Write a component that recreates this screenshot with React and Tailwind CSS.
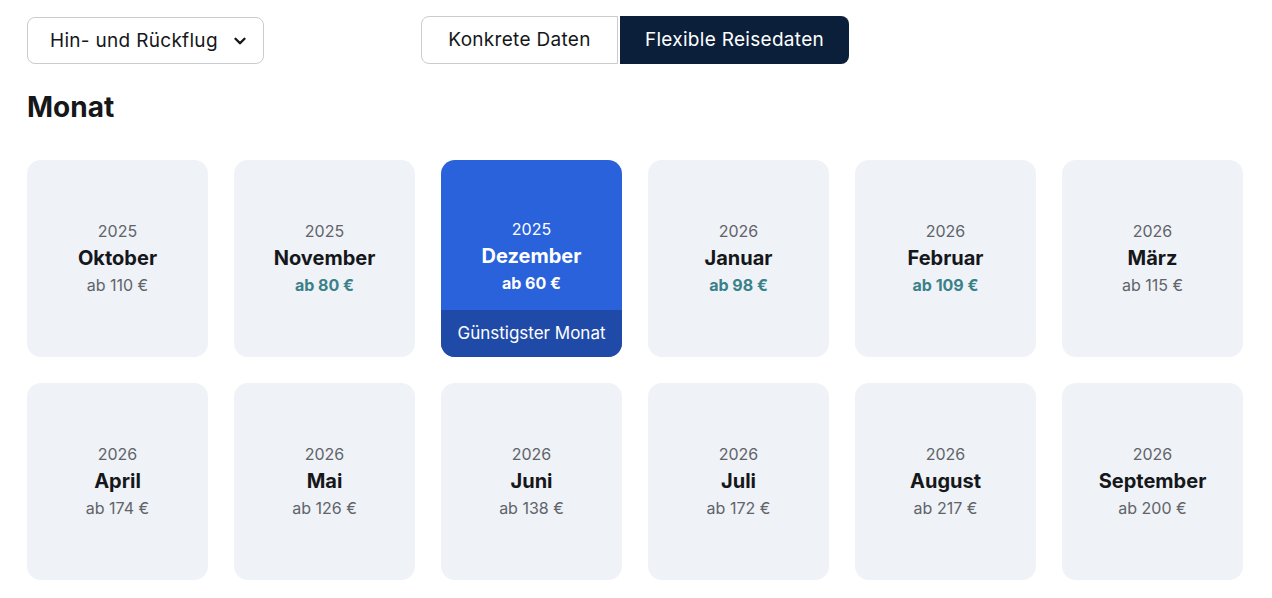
import React from 'react';

const months = [
    { year: '2025', name: 'Oktober', price: 'ab 110 €' },
    { year: '2025', name: 'November', price: 'ab 80 €', cheap: true },
    { year: '2025', name: 'Dezember', price: 'ab 60 €', best: true },
    { year: '2026', name: 'Januar', price: 'ab 98 €', cheap: true },
    { year: '2026', name: 'Februar', price: 'ab 109 €', cheap: true },
    { year: '2026', name: 'März', price: 'ab 115 €' },
    { year: '2026', name: 'April', price: 'ab 174 €' },
    { year: '2026', name: 'Mai', price: 'ab 126 €' },
    { year: '2026', name: 'Juni', price: 'ab 138 €' },
    { year: '2026', name: 'Juli', price: 'ab 172 €' },
    { year: '2026', name: 'August', price: 'ab 217 €' },
    { year: '2026', name: 'September', price: 'ab 200 €' },
];

const MonthCard = ({ m }) => {
    if (m.best) {
        return (
            <div className="h-[197px] rounded-[14px] bg-[#2962db] text-white flex flex-col overflow-hidden">
                <div className="flex-1 flex flex-col items-center justify-center pt-[42px]">
                    <div className="text-[16px] leading-[27px]">{m.year}</div>
                    <div className="text-[20px] leading-[27px] font-bold">{m.name}</div>
                    <div className="text-[16px] leading-[27px] font-bold">{m.price}</div>
                </div>
                <div className="h-[47px] bg-[#1f4aa8] flex items-center justify-center text-[17px]">Günstigster Monat</div>
            </div>
        );
    }
    return (
        <div className="h-[197px] rounded-[14px] bg-[#eff2f7] flex flex-col items-center justify-center">
            <div className="text-[16px] leading-[27px] text-[#5f6469]">{m.year}</div>
            <div className="text-[20px] leading-[27px] font-bold text-[#15171a]">{m.name}</div>
            {m.cheap ? (
                <div className="text-[16px] leading-[27px] font-bold text-[#3a8189]">{m.price}</div>
            ) : (
                <div className="text-[16px] leading-[27px] text-[#5f6469]">{m.price}</div>
            )}
        </div>
    );
};

const App = () => {
    return (
        <div className="bg-white w-[1272px] h-[598px] pl-[27px] pr-[29px] pt-[16px] font-['Inter',sans-serif] text-[#15171a]">
            <div className="flex items-center">
                <button className="w-[237px] h-[47px] mt-[1px] border border-[#c8cbd0] rounded-[8px] flex items-center justify-between pl-[22px] pr-[14px] text-[19px] tracking-[0.3px]">
                    <span className="pt-[1px]">Hin- und Rückflug</span>
                    <svg width="18" height="18" viewBox="0 0 24 24" fill="none" stroke="currentColor" strokeWidth="3.2" strokeLinecap="round" strokeLinejoin="round"><path d="M6 9l6 6 6-6" /></svg>
                </button>
                <div className="flex ml-[157px]">
                    <button className="w-[197px] h-[48px] border border-[#c8cbd0] rounded-l-[8px] text-[19px] tracking-[0.3px]">Konkrete Daten</button>
                    <button className="w-[229px] h-[48px] ml-[2px] bg-[#0c1f3a] text-white rounded-r-[8px] text-[19px] tracking-[0.3px]">Flexible Reisedaten</button>
                </div>
            </div>
            <h2 className="mt-[26px] text-[28px] leading-[34px] font-bold">Monat</h2>
            <div className="grid grid-cols-6 gap-[26px] mt-[36px]">
                {months.map((m) => <MonthCard key={m.name} m={m} />)}
            </div>
        </div>
    );
};

export default App;
